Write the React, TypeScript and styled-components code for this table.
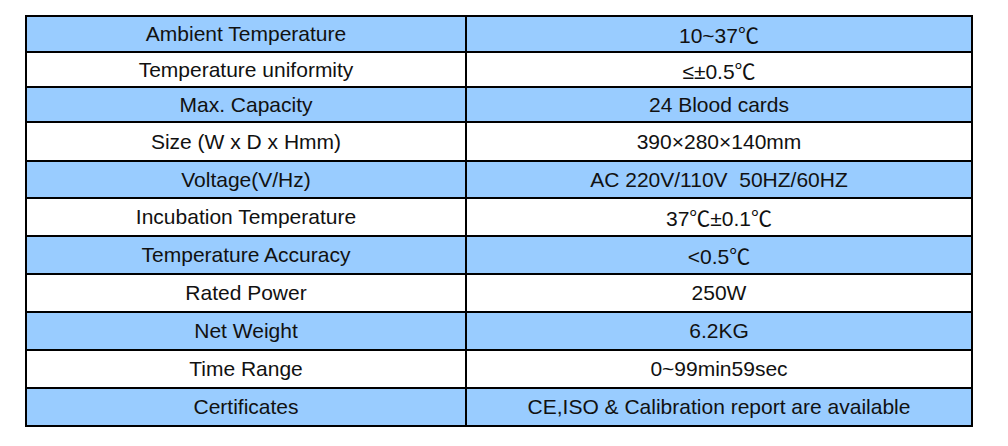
import React from "react";
import styled, {createGlobalStyle} from "styled-components";

const GlobalStyle = createGlobalStyle`
  html, body {
    margin: 0;
    padding: 0;
    background: #ffffff;
  }
`

const Page = styled.div`
  width: 1008px;
  height: 446px;
  padding: 15px 0 0 25px;
  box-sizing: border-box;
  background: #ffffff;
`

const Table = styled.table`
  width: 948px;
  border-collapse: collapse;
  border: 2px solid #000;
  font-family: "Liberation Sans", Arial, "Noto Sans CJK SC", sans-serif;
  font-size: 21px;
  color: #111;
`

const Row = styled.tr<{ $blue: boolean; $h: number }>`
  height: ${p => p.$h}px;
  background: ${p => (p.$blue ? "#99ccff" : "#ffffff")};
`

const Cell = styled.td`
  border: 2px solid #000;
  text-align: center;
  vertical-align: middle;
  padding: 0;
  white-space: pre;
  &:first-child {
    width: 438px;
  }
`

const specs: [string, string][] = [
    ["Ambient Temperature", "10~37℃"],
    ["Temperature uniformity", "≤±0.5℃"],
    ["Max. Capacity", "24 Blood cards"],
    ["Size (W x D x Hmm)", "390×280×140mm"],
    ["Voltage(V/Hz)", "AC 220V/110V  50HZ/60HZ"],
    ["Incubation Temperature", "37℃±0.1℃"],
    ["Temperature Accuracy", "<0.5℃"],
    ["Rated Power", "250W"],
    ["Net Weight", "6.2KG"],
    ["Time Range", "0~99min59sec"],
    ["Certificates", "CE,ISO & Calibration report are available"],
]

const heights = [36, 35, 35, 39, 37, 38, 38, 38, 38, 38, 38]

const App = () => {
    return (
        <Page>
            <GlobalStyle />
            <Table>
                <tbody>
                {specs.map(([name, value], i) => (
                    <Row key={name} $blue={i % 2 === 0} $h={heights[i]}>
                        <Cell>{name}</Cell>
                        <Cell>{value}</Cell>
                    </Row>
                ))}
                </tbody>
            </Table>
        </Page>
    )
}

export default App
